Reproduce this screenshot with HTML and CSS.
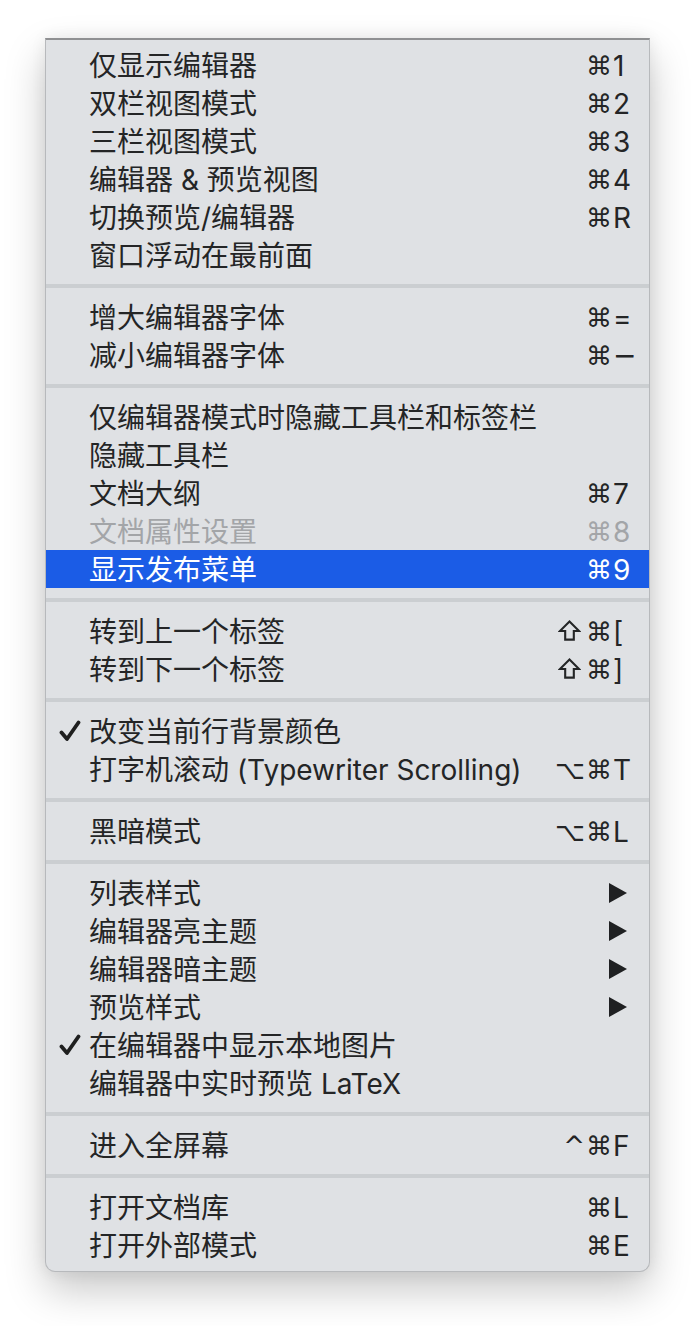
FILE: index.html
```html
<!DOCTYPE html>
<html lang="zh-CN">
<head>
<meta charset="utf-8">
<link rel="stylesheet" href="styles.css">
</head>
<body>
<div class="menu">
  <div class="row"><span class="check"></span><span class="label">仅显示编辑器</span><span class="mods">⌘</span><span class="key">1</span></div>
  <div class="row"><span class="check"></span><span class="label">双栏视图模式</span><span class="mods">⌘</span><span class="key">2</span></div>
  <div class="row"><span class="check"></span><span class="label">三栏视图模式</span><span class="mods">⌘</span><span class="key">3</span></div>
  <div class="row"><span class="check"></span><span class="label">编辑器 &amp; 预览视图</span><span class="mods">⌘</span><span class="key">4</span></div>
  <div class="row"><span class="check"></span><span class="label">切换预览/编辑器</span><span class="mods">⌘</span><span class="key">R</span></div>
  <div class="row"><span class="check"></span><span class="label">窗口浮动在最前面</span><span class="mods"></span><span class="key"></span></div>
  <div class="sep"></div>
  <div class="row"><span class="check"></span><span class="label">增大编辑器字体</span><span class="mods">⌘</span><span class="key">=</span></div>
  <div class="row"><span class="check"></span><span class="label">减小编辑器字体</span><span class="mods">⌘</span><span class="key minus">−</span></div>
  <div class="sep"></div>
  <div class="row"><span class="check"></span><span class="label">仅编辑器模式时隐藏工具栏和标签栏</span><span class="mods"></span><span class="key"></span></div>
  <div class="row"><span class="check"></span><span class="label">隐藏工具栏</span><span class="mods"></span><span class="key"></span></div>
  <div class="row"><span class="check"></span><span class="label">文档大纲</span><span class="mods">⌘</span><span class="key">7</span></div>
  <div class="row disabled"><span class="check"></span><span class="label">文档属性设置</span><span class="mods">⌘</span><span class="key">8</span></div>
  <div class="row active"><span class="check"></span><span class="label">显示发布菜单</span><span class="mods">⌘</span><span class="key">9</span></div>
  <div class="sep"></div>
  <div class="row"><span class="check"></span><span class="label">转到上一个标签</span><span class="mods"><svg class="shift" viewBox="0 0 24 24" width="23" height="23"><path d="M12 2.5 L22 12.5 H16.5 V21.5 H7.5 V12.5 H2 Z" fill="none" stroke="currentColor" stroke-width="2.2" stroke-linejoin="miter"/></svg>⌘</span><span class="key">[</span></div>
  <div class="row"><span class="check"></span><span class="label">转到下一个标签</span><span class="mods"><svg class="shift" viewBox="0 0 24 24" width="23" height="23"><path d="M12 2.5 L22 12.5 H16.5 V21.5 H7.5 V12.5 H2 Z" fill="none" stroke="currentColor" stroke-width="2.2" stroke-linejoin="miter"/></svg>⌘</span><span class="key">]</span></div>
  <div class="sep"></div>
  <div class="row"><span class="check"><svg viewBox="0 0 22 24" width="22" height="24"><path d="M2.5 13.5 L8 20 L19.5 3.5" fill="none" stroke="#1f1f1f" stroke-width="3.8" stroke-linecap="round" stroke-linejoin="round"/></svg></span><span class="label">改变当前行背景颜色</span><span class="mods"></span><span class="key"></span></div>
  <div class="row"><span class="check"></span><span class="label">打字机滚动 (Typewriter Scrolling)</span><span class="mods">⌥⌘</span><span class="key">T</span></div>
  <div class="sep"></div>
  <div class="row"><span class="check"></span><span class="label">黑暗模式</span><span class="mods">⌥⌘</span><span class="key">L</span></div>
  <div class="sep"></div>
  <div class="row"><span class="check"></span><span class="label">列表样式</span><span class="mods"></span><span class="key"><span class="arrow"></span></span></div>
  <div class="row"><span class="check"></span><span class="label">编辑器亮主题</span><span class="mods"></span><span class="key"><span class="arrow"></span></span></div>
  <div class="row"><span class="check"></span><span class="label">编辑器暗主题</span><span class="mods"></span><span class="key"><span class="arrow"></span></span></div>
  <div class="row"><span class="check"></span><span class="label">预览样式</span><span class="mods"></span><span class="key"><span class="arrow"></span></span></div>
  <div class="row"><span class="check"><svg viewBox="0 0 22 24" width="22" height="24"><path d="M2.5 13.5 L8 20 L19.5 3.5" fill="none" stroke="#1f1f1f" stroke-width="3.8" stroke-linecap="round" stroke-linejoin="round"/></svg></span><span class="label">在编辑器中显示本地图片</span><span class="mods"></span><span class="key"></span></div>
  <div class="row"><span class="check"></span><span class="label">编辑器中实时预览 LaTeX</span><span class="mods"></span><span class="key"></span></div>
  <div class="sep"></div>
  <div class="row"><span class="check"></span><span class="label">进入全屏幕</span><span class="mods">^⌘</span><span class="key">F</span></div>
  <div class="sep"></div>
  <div class="row"><span class="check"></span><span class="label">打开文档库</span><span class="mods">⌘</span><span class="key">L</span></div>
  <div class="row"><span class="check"></span><span class="label">打开外部模式</span><span class="mods">⌘</span><span class="key">E</span></div>
</div>
</body>
</html>
```

FILE: styles.css
```css
html, body {
  margin: 0;
  padding: 0;
  background: #ffffff;
}

body {
  font-family: "Inter", "Noto Sans CJK SC", "DejaVu Sans", sans-serif;
  font-size: 28px;
  color: #242526;
  padding-bottom: 60px;
}

.menu {
  box-sizing: border-box;
  width: 605px;
  margin: 38px 0 0 45px;
  padding: 6px 0 7px;
  background: #dfe1e4;
  border: 1px solid #b7b9bc;
  border-top: 2px solid #8f9092;
  border-radius: 0 0 10px 10px;
  box-shadow: 0 18px 40px rgba(0, 0, 0, 0.22), 0 0 16px rgba(0, 0, 0, 0.07);
}

.row {
  display: flex;
  align-items: center;
  height: 38px;
  line-height: 38px;
  padding-top: 1px;
  box-sizing: border-box;
  white-space: nowrap;
}

.check {
  width: 43px;
  flex: none;
  display: flex;
  justify-content: flex-end;
  align-items: center;
}

.check svg {
  display: block;
  margin-right: 8px;
  margin-top: -2px;
}

.label {
  flex: 1;
}

.mods {
  flex: none;
  width: 90px;
  display: flex;
  justify-content: flex-end;
  align-items: center;
  font-family: "DejaVu Sans", "Liberation Sans", sans-serif;
  font-size: 26px;
  letter-spacing: 1px;
}

.shift {
  display: block;
  margin-right: 5px;
  margin-top: -2px;
}

.key {
  flex: none;
  width: 36px;
  display: flex;
  align-items: center;
}

.minus {
  font-family: "DejaVu Sans", sans-serif;
}

.arrow {
  display: block;
  width: 0;
  height: 0;
  margin-left: -4px;
  margin-top: -2px;
  border-left: 18px solid #1f2022;
  border-top: 10px solid transparent;
  border-bottom: 10px solid transparent;
}

.disabled {
  color: #a3a5a8;
}

.active {
  background: #1b5ce6;
  color: #ffffff;
}

.sep {
  height: 4px;
  margin: 10px 0;
  background: #cbced1;
}
```
